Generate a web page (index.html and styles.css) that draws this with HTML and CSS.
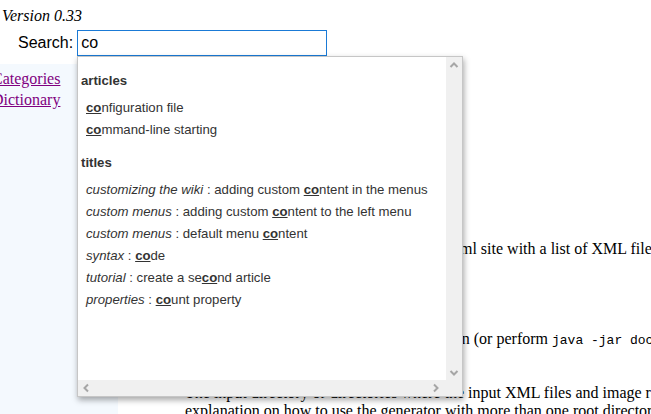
FILE: index.html
```html
<!DOCTYPE html>
<html>
<head>
<meta charset="utf-8">
<title>docGenerator</title>
<link rel="stylesheet" href="styles.css">
</head>
<body>
<header class="top">
  <div class="version">Version 0.33</div>
  <div class="search">
    <label class="search-label" for="q">Search:</label>
    <input id="q" class="search-input" type="text" value="co">
  </div>
</header>

<div class="layout">
  <nav class="sidebar">
    <ul class="side-links">
      <li><a href="#">Categories</a></li>
      <li><a href="#">Dictionary</a></li>
    </ul>
  </nav>
  <main class="main">
    <h2 class="title">Introduction</h2>
    <p>This page describes how to use<br>the docGenerator tool.</p>
    <p>The tool is written in Java and<br>needs a recent runtime.</p>
    <p>The docGenerator application creates an html site with a list of XML files and a table of contents for each category.<br>in the given directories.</p>
    <h3 class="sub">Usage</h3>
    <p>Double-click on the jar to run the generation (or perform <code>java -jar docGenerator.jar</code>)<br>to launch it.</p>
    <p>The input directory or directories where the input XML files and image resources are located. See below for an<br>explanation on how to use the generator with more than one root directory.</p>
  </main>
</div>

<div class="popup">
  <div class="popup-content">
    <div class="group">
      <div class="group-title">articles</div>
      <div class="item"><b class="hl">co</b>nfiguration file</div>
      <div class="item"><b class="hl">co</b>mmand-line starting</div>
    </div>
    <div class="group">
      <div class="group-title">titles</div>
      <div class="item"><i>customizing the wiki</i> : adding custom <b class="hl">co</b>ntent in the menus</div>
      <div class="item"><i>custom menus</i> : adding custom <b class="hl">co</b>ntent to the left menu</div>
      <div class="item"><i>custom menus</i> : default menu <b class="hl">co</b>ntent</div>
      <div class="item"><i>syntax</i> : <b class="hl">co</b>de</div>
      <div class="item"><i>tutorial</i> : create a se<b class="hl">co</b>nd article</div>
      <div class="item"><i>properties</i> : <b class="hl">co</b>unt property</div>
    </div>
  </div>
  <div class="vbar">
    <svg class="arrow" width="10" height="8" viewBox="0 0 10 8"><polyline points="1.5,6 5,2.5 8.5,6" fill="none" stroke="#a6a6a6" stroke-width="2"/></svg>
    <svg class="arrow" width="10" height="8" viewBox="0 0 10 8"><polyline points="1.5,2 5,5.5 8.5,2" fill="none" stroke="#a6a6a6" stroke-width="2"/></svg>
  </div>
  <div class="hbar">
    <svg class="arrow" width="8" height="10" viewBox="0 0 8 10"><polyline points="6,1.5 2.5,5 6,8.5" fill="none" stroke="#a6a6a6" stroke-width="2"/></svg>
    <svg class="arrow" width="8" height="10" viewBox="0 0 8 10"><polyline points="2,1.5 5.5,5 2,8.5" fill="none" stroke="#a6a6a6" stroke-width="2"/></svg>
  </div>
  <div class="corner"></div>
</div>
</body>
</html>
```

FILE: styles.css
```css
html, body {
  margin: 0;
  padding: 0;
  overflow: hidden;
}
body {
  font-family: "Liberation Serif", "Times New Roman", serif;
  font-size: 16px;
  line-height: 18px;
  color: #000;
  background: #fff;
  width: 1100px;
  min-height: 414px;
}
.top {
  padding: 7px 0 8px 2px;
}
.version {
  font-style: italic;
  line-height: 18px;
}
.search {
  display: flex;
  align-items: center;
  gap: 4px;
  margin: 5px 0 0 16px;
}
.search-label {
  font-family: "Liberation Sans", Arial, sans-serif;
  font-size: 16px;
}
.search-input {
  box-sizing: border-box;
  width: 250px;
  height: 26px;
  margin: 0;
  border: 1px solid #1a7ad6;
  padding: 0 3px;
  font-family: "Liberation Sans", Arial, sans-serif;
  font-size: 16px;
  color: #000;
  outline: none;
  background: #fff;
}
.layout {
  display: flex;
  min-height: 350px;
}
.sidebar {
  width: 118px;
  flex: none;
  background: #f4f9fe;
}
.side-links {
  list-style: none;
  margin: 0 0 0 -8px;
  padding: 4px 0 0 0;
}
.side-links li {
  line-height: 21px;
}
.side-links a {
  color: #800080;
  text-decoration: underline;
}
.main {
  padding: 28px 0 0 67px;
  white-space: nowrap;
}
.main p {
  margin: 0 0 16px 0;
}
.title {
  font-size: 24px;
  line-height: 28px;
  margin: 0 0 16px 0;
}
.sub {
  font-size: 18px;
  line-height: 22px;
  margin: 0 0 16px 0;
}
code {
  font-family: "Liberation Mono", "Courier New", monospace;
  font-size: 13px;
}
.popup {
  position: absolute;
  left: 77px;
  top: 56px;
  width: 384px;
  height: 339px;
  border: 1px solid #c6c6c6;
  background: #fff;
  box-shadow: 1px 3px 6px rgba(0, 0, 0, 0.35);
  display: grid;
  grid-template-columns: 368px 16px;
  grid-template-rows: 323px 16px;
  font-family: "Liberation Sans", Arial, sans-serif;
  font-size: 13.2px;
  color: #333;
}
.popup-content {
  padding: 13px 0 0 3px;
  overflow: hidden;
  white-space: nowrap;
}
.group + .group {
  margin-top: 11px;
}
.group-title {
  font-weight: bold;
  line-height: 22px;
  margin-bottom: 5px;
}
.item {
  line-height: 22px;
  padding-left: 5px;
}
.hl {
  text-decoration: underline;
}
.vbar {
  background: #f0f0f0;
  display: flex;
  flex-direction: column;
  justify-content: space-between;
  align-items: center;
  padding: 4px 0 3px 0;
}
.hbar {
  background: #f0f0f0;
  display: flex;
  justify-content: space-between;
  align-items: center;
  padding: 0 6px 0 4px;
}
.corner {
  background: #f0f0f0;
}
.arrow {
  display: block;
}
```
